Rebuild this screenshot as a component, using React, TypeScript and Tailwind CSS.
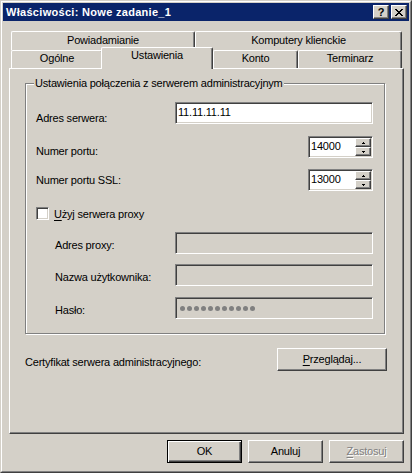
import React from 'react';

// classic win9x/2000 bevels
const sunken =
    'border border-t-[#808080] border-l-[#808080] border-r-white border-b-white shadow-[inset_1px_1px_0_#404040,inset_-1px_-1px_0_#D4D0C8]';
const raised =
    'border border-t-white border-l-white border-r-[#404040] border-b-[#404040] shadow-[inset_-1px_-1px_0_#808080]';
const tab =
    'rounded-t-[2px] border-l border-t border-r border-l-white border-t-white border-r-[#404040] shadow-[inset_-1px_0_0_#808080] text-center';

const CloseGlyph = () => {
    const rows = ['11000011', '01100110', '00111100', '00011000', '00111100', '01100110', '11000011'];
    return (
        <svg width="8" height="7" viewBox="0 0 8 7" shapeRendering="crispEdges">
            {rows.map((r, y) =>
                r.split('').map((c, x) => (c === '1' ? <rect key={`${x}-${y}`} x={x} y={y} width="1" height="1" fill="#000" /> : null))
            )}
        </svg>
    );
};

const Arrow = ({ up }: { up?: boolean }) => (
    <svg width="3" height="2" viewBox="0 0 3 2" shapeRendering="crispEdges">
        {up ? (
            <>
                <rect x="1" y="0" width="1" height="1" fill="#000" />
                <rect x="0" y="1" width="3" height="1" fill="#000" />
            </>
        ) : (
            <>
                <rect x="0" y="0" width="3" height="1" fill="#000" />
                <rect x="1" y="1" width="1" height="1" fill="#000" />
            </>
        )}
    </svg>
);

function TextBox({ value, disabled, className }: { value?: string; disabled?: boolean; className?: string }) {
    return (
        <div className={`${sunken} h-[22px] p-px ${disabled ? 'bg-[#D4D0C8]' : 'bg-white'} ${className ?? ''}`}>
            <div className="pl-[1px] pt-[2px] whitespace-nowrap">{value}</div>
        </div>
    );
}

function Spin({ value }: { value: string }) {
    return (
        <div className={`${sunken} flex h-[22px] w-[65px] bg-white p-px`}>
            <div className="flex-1 pl-[1px] pt-[2px]">{value}</div>
            <div className="flex w-[16px] flex-col">
                <div className={`${raised} flex h-[9px] items-center justify-center bg-[#D4D0C8]`}>
                    <Arrow up />
                </div>
                <div className={`${raised} flex h-[9px] items-center justify-center bg-[#D4D0C8]`}>
                    <Arrow />
                </div>
            </div>
        </div>
    );
}

function Button({ children, className, isDefault }: { children: React.ReactNode; className?: string; isDefault?: boolean }) {
    const bevel = isDefault
        ? 'border border-black shadow-[inset_1px_1px_0_#fff,inset_-1px_-1px_0_#404040,inset_-2px_-2px_0_#808080]'
        : raised;
    return (
        <div className={`${bevel} flex h-[23px] w-[75px] items-center justify-center bg-[#D4D0C8] ${className ?? ''}`}>
            {children}
        </div>
    );
}

export default function App() {
    return (
        <div className="h-[473px] w-[412px] border border-t-[#D4D0C8] border-l-[#D4D0C8] border-r-[#404040] border-b-[#404040] bg-[#D4D0C8] font-['Liberation_Sans',Arial,sans-serif] text-[11px] leading-[13px] tracking-[-0.2px] text-black">
            <div className="h-full border border-t-white border-l-white border-r-[#808080] border-b-[#808080] p-px">
                {/* Title bar */}
                <div className="flex h-[18px] items-center bg-[#0A246A] pl-[3px] pr-[2px]">
                    <span className="flex-1 whitespace-nowrap font-bold tracking-[0.3px] text-white">Właściwości: Nowe zadanie_1</span>
                    <div className={`${raised} flex h-[14px] w-[16px] items-center justify-center bg-[#D4D0C8] text-[11px] font-bold leading-none`}>
                        ?
                    </div>
                    <div className={`${raised} ml-[2px] flex h-[14px] w-[16px] items-center justify-center bg-[#D4D0C8]`}>
                        <CloseGlyph />
                    </div>
                </div>

                <div className="ml-[6px] mt-[10px] w-[395px]">
                    {/* Tabs */}
                    <div className="flex h-[19px] px-[2px]">
                        <div className={`${tab} w-[184px] pt-[2px]`}>Powiadamianie</div>
                        <div className={`${tab} w-[207px] pt-[2px]`}>Komputery klienckie</div>
                    </div>
                    <div className="flex h-[18px] items-end px-[2px]">
                        <div className={`${tab} h-[18px] w-[92px] pt-[1px]`}>Ogólne</div>
                        <div className={`${tab} relative z-10 -mb-px -ml-[2px] h-[22px] w-[112px] bg-[#D4D0C8] pt-[1px]`}>
                            Ustawienia
                        </div>
                        <div className={`${tab} h-[18px] w-[85px] pt-[1px]`}>Konto</div>
                        <div className={`${tab} h-[18px] w-[104px] pt-[1px]`}>Terminarz</div>
                    </div>

                    {/* Panel */}
                    <div className="h-[366px] border border-t-white border-l-white border-r-[#404040] border-b-[#404040] pl-[15px] pt-[8px] shadow-[inset_-1px_-1px_0_#808080]">
                        <fieldset className="w-[360px] border border-[#808080] pb-[14px] pl-[10px] shadow-[inset_1px_1px_0_#fff,1px_1px_0_#fff]">
                            <legend className="-ml-[2px] bg-[#D4D0C8] px-[1px]">
                                Ustawienia połączenia z serwerem administracyjnym
                            </legend>

                            <div className="mt-[12px] flex h-[22px]">
                                <div className="mt-[10px] w-[139px]">Adres serwera:</div>
                                <TextBox value="11.11.11.11" className="w-[198px]" />
                            </div>
                            <div className="mt-[12px] flex h-[22px]">
                                <div className="mt-[9px] w-[272px]">Numer portu:</div>
                                <Spin value="14000" />
                            </div>
                            <div className="mt-[11px] flex h-[22px]">
                                <div className="mt-[5px] w-[272px]">Numer portu SSL:</div>
                                <Spin value="13000" />
                            </div>

                            <div className="mt-[16px] flex h-[13px] items-start">
                                <div className={`${sunken} h-[13px] w-[13px] bg-white`} />
                                <div className="ml-[5px] mt-[1px]">
                                    <span className="underline underline-offset-[2px]">U</span>żyj serwera proxy
                                </div>
                            </div>

                            <div className="mt-[12px] flex h-[22px]">
                                <div className="ml-[19px] mt-[7px] w-[120px]">Adres proxy:</div>
                                <TextBox disabled className="w-[198px]" />
                            </div>
                            <div className="mt-[10px] flex h-[22px]">
                                <div className="ml-[19px] mt-[7px] w-[120px]">Nazwa użytkownika:</div>
                                <TextBox disabled className="w-[198px]" />
                            </div>
                            <div className="mt-[11px] flex h-[22px]">
                                <div className="ml-[19px] mt-[7px] w-[120px]">Hasło:</div>
                                <div className={`${sunken} flex h-[22px] w-[198px] items-center gap-[2px] bg-[#D4D0C8] pl-[4px]`}>
                                    {Array.from({ length: 11 }).map((_, i) => (
                                        <span key={i} className="h-[5px] w-[5px] rounded-full bg-[#808080]" />
                                    ))}
                                </div>
                            </div>
                        </fieldset>

                        <div className="mt-[14px] flex h-[23px]">
                            <div className="mt-[8px] w-[252px]">Certyfikat serwera administracyjnego:</div>
                            <Button className="w-[110px]">
                                <span>
                                    <span className="underline underline-offset-[2px]">P</span>rzeglądaj...
                                </span>
                            </Button>
                        </div>
                    </div>
                </div>

                {/* Dialog buttons */}
                <div className="mt-[6px] flex justify-end gap-[6px] pr-[5px]">
                    <Button isDefault>OK</Button>
                    <Button>Anuluj</Button>
                    <Button>
                        <span className="text-[#808080] [text-shadow:1px_1px_0_#fff]">
                            <span className="underline underline-offset-[2px]">Z</span>astosuj
                        </span>
                    </Button>
                </div>
            </div>
        </div>
    );
}
